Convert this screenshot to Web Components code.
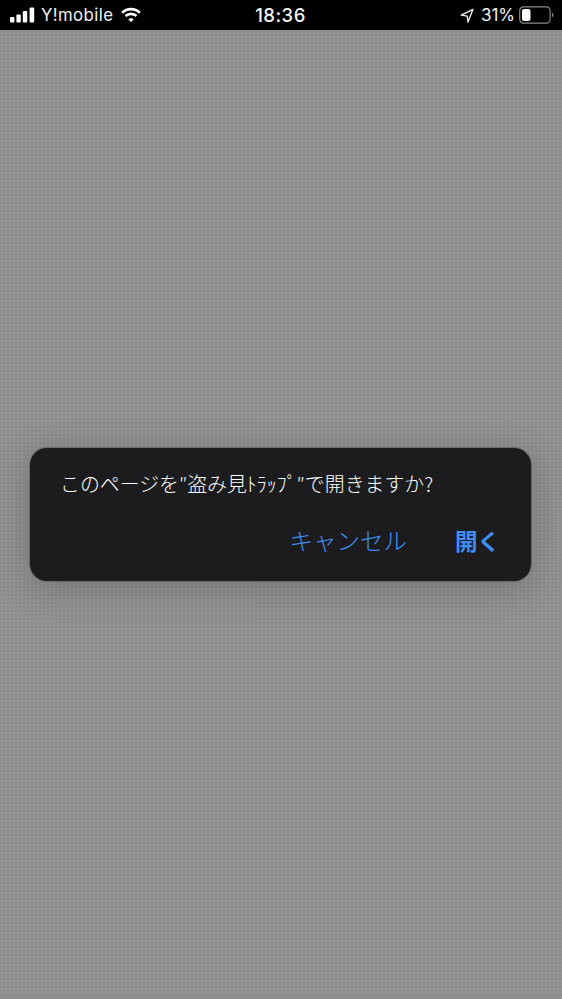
<!DOCTYPE html>
<html lang="ja">
<head>
<meta charset="utf-8">
<title>alert</title>
<style>
html,body{margin:0;padding:0;background:#919191}
body{font-family:"Inter","Noto Sans CJK JP",sans-serif}
</style>
</head>
<body>
<phone-screen>
  <status-bar slot="bar"></status-bar>
  <alert-box>
    このページを″盗み見ﾄﾗｯﾌﾟ″で開きますか?
    <alert-action slot="actions">キャンセル</alert-action>
    <alert-action slot="actions" primary>開く</alert-action>
  </alert-box>
</phone-screen>
<script>
class PhoneScreen extends HTMLElement{
constructor(){
  super();
  this.attachShadow({mode:'open'}).innerHTML=`<style>
:host{display:flex;flex-direction:column;width:562px;height:999px;overflow:hidden;background-color:#919191;
background-image:repeating-linear-gradient(90deg,rgba(0,0,0,.03) 0 1px,rgba(255,255,255,.025) 1px 2px,transparent 2px 4px),repeating-linear-gradient(0deg,rgba(0,0,0,.03) 0 1px,rgba(255,255,255,.025) 1px 2px,transparent 2px 4px)}
main{flex:1;padding:418px 31px 0 30px}
</style><slot name="bar"></slot><main><slot></slot></main>`;
}
}
class StatusBar extends HTMLElement{
constructor(){
  super();
  this.attachShadow({mode:'open'}).innerHTML=`<style>
:host{display:grid;grid-template-columns:1fr auto 1fr;align-items:center;height:30px;background:#000;color:#f2f2f2;font:17px/30px "Inter","Noto Sans",sans-serif;flex:none}
.l,.r{display:flex;align-items:center}
.l{padding-left:10px}
.r{justify-content:flex-end;padding-right:8px}
.carrier{margin-left:6px;font-size:16.8px;letter-spacing:.4px}
.wifi{margin-left:6px}
.time{font-weight:500;font-size:18.500px;letter-spacing:.5px;margin-left:-1px}
.pct{margin:0 4px 0 7px;font-size:17px}
svg{display:block}
</style>
<div class="l">
  <svg width="25" height="16" viewBox="0 0 25 16"><g fill="#fff"><rect x="0" y="10" width="4.400" height="5.500" rx="1"/><rect x="6.400" y="7.500" width="4.400" height="8" rx="1"/><rect x="12.800" y="4" width="4.400" height="11.500" rx="1"/><rect x="19.600" y=".5" width="4.600" height="15" rx="1"/></g></svg>
  <span class="carrier">Y!mobile</span>
  <svg class="wifi" width="24" height="17" viewBox="0 0 23 17"><path d="M11.500 3.600c3 0 5.800 1.200 7.900 3.200l1.800-2A14 14 0 0 0 11.500.8 14 14 0 0 0 1.800 4.800l1.800 2a11.400 11.400 0 0 1 7.900-3.200z" fill="#fff"/><path d="M11.500 8.300c1.800 0 3.400.7 4.600 1.800l1.800-2a9.400 9.400 0 0 0-12.800 0l1.800 2a6.800 6.800 0 0 1 4.600-1.800z" fill="#fff"/><path d="M11.500 11.200c-1 0-1.900.4-2.600 1l2.600 3 2.600-3c-.7-.6-1.600-1-2.600-1z" fill="#fff"/></svg>
</div>
<div class="time">18:36</div>
<div class="r">
  <svg width="14" height="15" viewBox="0 0 14 15"><path d="M13 1.300 1.200 7.200l6 .9.800 6z" fill="none" stroke="#f2f2f2" stroke-width="1.300" stroke-linejoin="round"/></svg>
  <span class="pct">31%</span>
  <svg width="35" height="18" viewBox="0 0 35 18"><rect x=".7" y=".9" width="30.400" height="16.200" rx="3.800" fill="none" stroke="#8a8a8a" stroke-width="1.200"/><rect x="3" y="3" width="8.500" height="12" rx="2" fill="#fff"/><path d="M33 6.800c.9.300 1.300 1.200 1.300 2.200s-.4 1.900-1.300 2.200z" fill="#8a8a8a"/></svg>
</div>`;
}
}
class AlertBox extends HTMLElement{
constructor(){
  super();
  this.attachShadow({mode:'open'}).innerHTML=`<style>
:host{display:block;box-sizing:border-box;height:133px;padding:22px 20px 0 30px;border-radius:17px;background:#1c1c1e;color:#fff;
box-shadow:0 0 0 1px rgba(70,70,70,.4),0 6px 36px rgba(0,0,0,.2);font:300 19.900px/28px "Noto Sans CJK JP",sans-serif;white-space:nowrap}
.actions{display:flex;justify-content:flex-end;gap:48px;margin-top:26px;padding-right:11px}
</style><div><slot></slot></div><div class="actions"><slot name="actions"></slot></div>`;
}
}
class AlertAction extends HTMLElement{
constructor(){
  super();
  this.attachShadow({mode:'open'}).innerHTML=`<style>
:host{display:block;color:#3f8ff2;font:300 23.500px/32px "Noto Sans CJK JP",sans-serif}
:host([primary]){font-weight:700;font-size:22.500px}
</style><slot></slot>`;
}
}
customElements.define('phone-screen',PhoneScreen);
customElements.define('status-bar',StatusBar);
customElements.define('alert-box',AlertBox);
customElements.define('alert-action',AlertAction);
</script>
</body>
</html>
